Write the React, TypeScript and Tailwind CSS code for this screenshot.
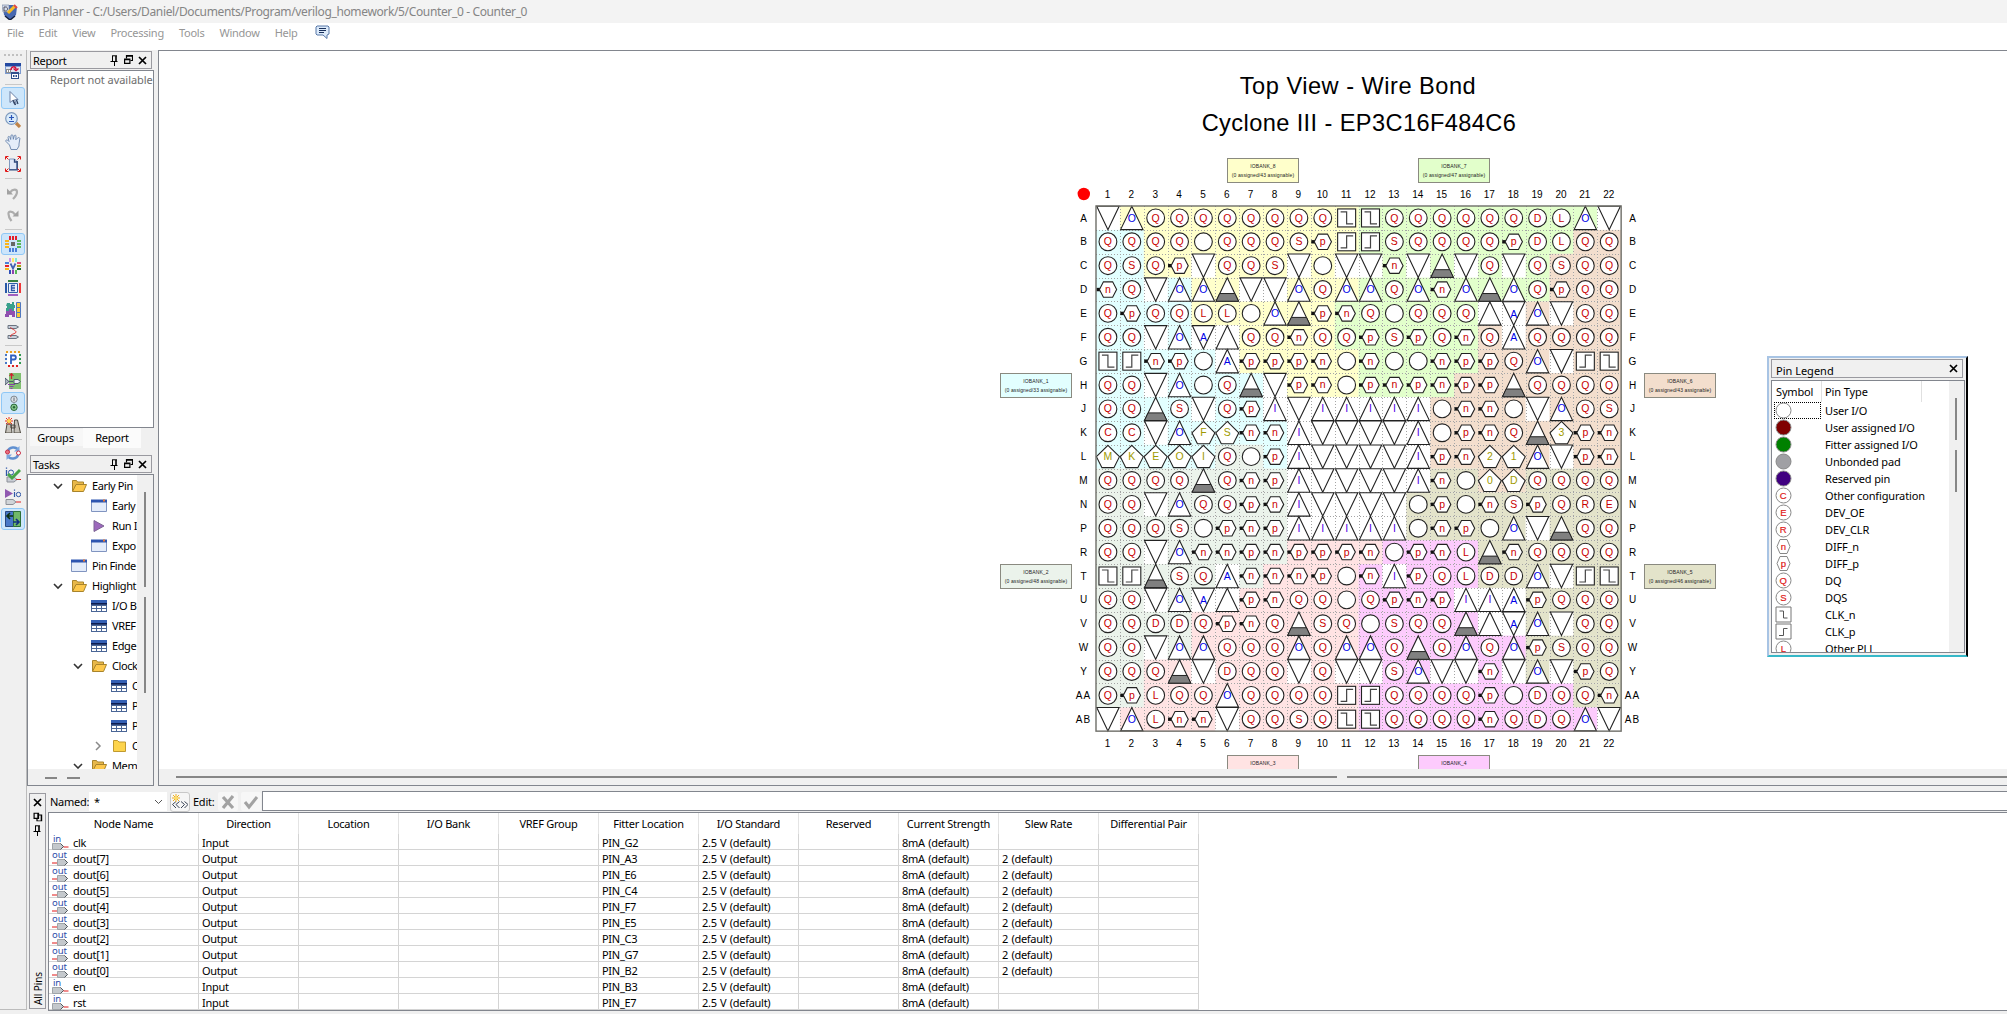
import React from "react";

type P = { children?: React.ReactNode };

const Ico = ({ children, size = 16 }: P & { size?: number }) => (
  <svg width={size} height={size} viewBox="0 0 16 16" className="block shrink-0" fill="none">
    {children}
  </svg>
);

/* ---------- small window glyphs ---------- */
const Pin = () => (
  <svg width="9" height="11" viewBox="0 0 9 11" fill="none" className="shrink-0">
    <path d="M2.5 1v5M0.5 6.5h7M4.5 7v4M2 0.8h5" stroke="#000" />
    <path d="M6 1v5" stroke="#000" strokeWidth="1.6" />
  </svg>
);
const Restore = () => (
  <svg width="9" height="10" viewBox="0 0 9 10" fill="none" className="shrink-0">
    <path d="M2.5 3.5v-2.8h6v4.8h-2M2.5 1.2h6" stroke="#000" strokeWidth="1.2" />
    <path d="M0.6 4h5.3v4.4h-5.3zM0.6 4.6h5.3" stroke="#000" strokeWidth="1.2" />
  </svg>
);
const Close = () => (
  <svg width="9" height="9" viewBox="0 0 9 9" className="shrink-0">
    <path d="M1 1l7 7M8 1l-7 7" stroke="#000" strokeWidth="1.7" />
  </svg>
);

/* ---------- toolbar icons ---------- */
const tools: Record<string, React.ReactNode> = {
  report: (
    <>
      <path d="M0 0h16v11H0z" fill="#7d9bd0" />
      <path d="M0 0h16v3H0z" fill="#2348a0" />
      <path d="M1 4h14v6H1z" fill="#dfe5f2" />
      <path d="M1 6h5v4H1z" fill="#8c8c8c" />
      <path d="M2 7h1v2H2zM4 7h1v2H4z" fill="#fff" />
      <path d="M6 7c0-4 5-4 5-1M8.500 5.500l2.500 2 2.500-2" stroke="#d0103c" strokeWidth="1.500" />
      <path d="M6 9h8v7H6z" fill="#30508c" />
      <path d="M7 11h6v4H7z" fill="#fff" />
      <path d="M8 12h1.500v2H8zM10.500 12H12v2h-1.500z" fill="#30508c" />
    </>
  ),
  cursor: (
    <>
      <path d="M5 1.500v11l2.500-2 2 4 1.700-.8-1.700-3.900 3.500-.3z" fill="#fff" stroke="#6b80a6" />
      <path d="M8 10l2.500 5M11.500 10l1.500 4" stroke="#283c5c" strokeWidth="1.200" />
    </>
  ),
  zoom: (
    <>
      <path d="M11 11l4 4" stroke="#c08448" strokeWidth="3.200" />
      <circle cx="6.500" cy="6.500" r="5.800" fill="#d9ebfa" stroke="#7d99bd" strokeWidth="1.200" />
      <path d="M4 5.500h5M6.500 3v5M4 9.500h5" stroke="#2a55b8" strokeWidth="1.200" />
    </>
  ),
  hand: (
    <path
      d="M4.500 11L1 7.500c-1-1.500 1-2 2-1l1 1-1-4c0-1.500 1.500-1.500 2 0l.7 2L6 1.800c0-1.400 1.800-1.400 2 0l.3 3.500L9.200 2c.4-1.300 2-1 1.800.3l-.2 3.500L12.500 4c.8-1 2.900-.2 2.300 1L14 10v2l-2 3.500H6z"
      fill="#e4edf9"
      stroke="#6882aa"
      strokeWidth=".9"
    />
  ),
  fit: (
    <>
      <path d="M4.500 3h5l2 2v8.500h-7z" fill="#dfe8f7" stroke="#8098c0" />
      <path d="M9.500 3v3h2.500M12.300 5v8.800H4" stroke="#314b7c" strokeWidth="1.300" />
      <path d="M.5 3.500v-3h3M1 1l2.500 2.500M12.500.5h3v3M15 1l-2.500 2.500M.5 12.500v3h3M1 15l2.500-2.500M15.500 12.500v3h-3M15 15l-2.500-2.500" stroke="#e01717" />
    </>
  ),
  undo: (
    <>
      <path d="M5 7.500c3-4 7-3.500 7-.5 0 3-1.500 4.500-4 7" stroke="#adadad" strokeWidth="2.200" />
      <path d="M2 3.500v6h6z" fill="#a2a2a2" />
    </>
  ),
  redo: (
    <>
      <path d="M10 7.500C7 3.500 3 4 3.500 7c0 3 1 4.500 3 7" stroke="#adadad" strokeWidth="2.200" />
      <path d="M13.500 3.500v6h-6z" fill="#a2a2a2" />
    </>
  ),
  chip: (
    <>
      <path d="M4 0h2v4H4zM7 0h2v4H7zM10 0h2v4h-2z" fill="#e5202b" />
      <path d="M4 12h2v4H4zM7 12h2v4H7zM10 12h2v4h-2z" fill="#4a7fd8" />
      <path d="M0 4h4v2H0zM0 7h4v2H0zM0 10h4v2H0z" fill="#f8b41c" />
      <path d="M12 4h4v2h-4zM12 7h4v2h-4zM12 10h4v2h-4z" fill="#58b858" />
      <path d="M6 6h4v4H6z" fill="#666" />
    </>
  ),
  vref: (
    <>
      <path d="M4 0h2v4H4z" fill="#c995e8" />
      <path d="M7 0h2v4H7z" fill="#fde86a" />
      <path d="M10 0h2v4h-2z" fill="#7ee8d8" />
      <path d="M0 4h4v2H0z" fill="#4a7fd8" />
      <path d="M0 7h4v2H0z" fill="#e5202b" />
      <path d="M0 10h4v2H0z" fill="#f8b41c" />
      <path d="M12 4h4v2h-4z" fill="#e04a80" />
      <path d="M12 7h4v2h-4z" fill="#b09c10" />
      <path d="M12 10h4v2h-4z" fill="#17682a" />
      <path d="M4 12h2v4H4z" fill="#3050b8" />
      <path d="M7 12h2v4H7z" fill="#9040b0" />
      <path d="M10 12h2v4h-2z" fill="#58b858" />
      <path d="M5.500 5.500l2.500 5 2.500-5" stroke="#4060b0" strokeWidth="1.700" />
    </>
  ),
  edge: (
    <>
      <path d="M3 0h10v2H3z" fill="#388040" />
      <path d="M3 14h10v2H3z" fill="#a060c0" />
      <path d="M0 3h2v10H0z" fill="#2858a8" />
      <path d="M14 3h2v10h-2z" fill="#f03838" />
      <path d="M3.500 3.500h9v9h-9z" fill="#eef2fc" stroke="#3060a8" />
      <path d="M10 5.500H6.500v5H10M6.500 8H10" stroke="#3058a8" strokeWidth="1.300" />
    </>
  ),
  pad: (
    <>
      <path d="M2 1h3v1h2V0h2v3h1v3H9v3H1V6h1V4H1z" fill="#38a08c" />
      <path d="M1 9h3V7h3v2h3v6H7v-2H4v2H0v-3h1z" fill="#9050b0" />
      <path d="M11.500.5h4v5h-4zM11.500 5.500h4v5h-4zM11.500 10.500h4v5h-4z" fill="#fac832" stroke="#5078c0" />
    </>
  ),
  diff: (
    <>
      <path d="M3 1.500h8l2.500 1.500L11 4.500H3zM3 11.500h8l2.500 1.500-2.500 1.500H3z" fill="#c8d0dc" stroke="#6c7480" />
      <path d="M6 3c-2 1 5 3 5 5s-7 2-5 5" stroke="#e03030" />
    </>
  ),
  p: (
    <>
      <path d="M2 2h12v12H2z" fill="#fff" />
      <path d="M1 3v12" stroke="#4878c8" strokeWidth="2" strokeDasharray="2 2" />
      <path d="M1 1h14" stroke="#e8a020" strokeWidth="2" strokeDasharray="2 2" />
      <path d="M15 3v12" stroke="#309850" strokeWidth="2" strokeDasharray="2 2" />
      <path d="M3 15h12" stroke="#e02020" strokeWidth="2" strokeDasharray="2 2" />
      <path d="M6 13V4.500h3c2.500 0 2.500 4 0 4H6" stroke="#3060c0" strokeWidth="1.800" />
    </>
  ),
  io: (
    <>
      <path d="M4 0h12v16H4z" fill="#80c070" />
      <path d="M0 5l4 3.500L0 12zM4 8.500h4" fill="#a8b4c0" stroke="#4c5868" />
      <path d="M9 6.500h4l2.500 2-2.500 2H9z" fill="#e8ecf4" stroke="#4c5868" />
      <path d="M6.500 6V1.500M4.500 3l2-2.500 2 2.500" stroke="#d02030" strokeWidth="1.200" />
      <path d="M3 11.500h7M4.500 13.500h4M5.500 15.500h2" stroke="#8840a8" />
    </>
  ),
  coin: (
    <>
      <circle cx="9" cy="4.300" r="3.200" fill="#dde2e8" stroke="#808890" />
      <path d="M9 2.500V6" stroke="#606870" />
      <circle cx="9" cy="12.300" r="3.200" fill="#88c890" stroke="#286838" />
      <circle cx="9" cy="12.300" r="1.200" fill="#286838" />
    </>
  ),
  find: (
    <>
      <path d="M2 7h4l1 9H0.500zM9.500 3h3l3 13H9zM6 8h4v3H6z" fill="#c4c0b8" stroke="#4c4840" />
      <path d="M4 0v8M0 4h8M1 1l6 6M7 1L1 7" stroke="#e83018" />
      <circle cx="4" cy="4" r="2" fill="#ffd84a" />
    </>
  ),
  sync: (
    <>
      <path d="M3 6c1-4 8-5 10-1" stroke="#6090d0" strokeWidth="2.600" />
      <path d="M13 10c-1 4-8 5-10 1" stroke="#6090d0" strokeWidth="2.600" />
      <path d="M14.500 1v5.500H9zM1.500 15V9.500H7z" fill="#7ba5de" />
      <circle cx="2.500" cy="7" r="2" fill="#e87080" stroke="#c83048" />
      <circle cx="13.500" cy="8" r="2" fill="#fff" stroke="#c83048" />
    </>
  ),
  iocheck: (
    <>
      <path d="M2 10h7l3 2.500-3 2.500H2z" fill="#c8ccd4" stroke="#8c9098" />
      <path d="M11 12.500h5" stroke="#e02020" />
      <path d="M1.500 3v6M1.500.5v1.300" stroke="#3058a8" strokeWidth="1.300" />
      <circle cx="6" cy="5.500" r="2.500" stroke="#3058a8" />
      <path d="M3 7l4 4 8-8" stroke="#48a448" strokeWidth="3" />
    </>
  ),
  ioplay: (
    <>
      <path d="M0 0l8 4.500L0 9z" fill="#9058b0" />
      <path d="M9.500 3v5M9.500.5v1.300" stroke="#3058a8" strokeWidth="1.200" />
      <circle cx="13.500" cy="5.500" r="2.200" stroke="#3058a8" />
      <path d="M1 10.500h7l3 2.500-3 2.500H1z" fill="#d0d4d8" stroke="#8c9098" />
      <path d="M11 13h5" stroke="#e02020" />
    </>
  ),
  swap: (
    <>
      <path d="M.5.5h8v15h-8z" fill="#4878c8" stroke="#284880" />
      <path d="M8.500.5h7v15h-7z" fill="#70b868" stroke="#2c7038" />
      <path d="M2 5h6M5 2L2 5l3 3" stroke="#0c3010" strokeWidth="1.600" />
      <path d="M8 11h6M11 8l3 3-3 3" stroke="#103080" strokeWidth="1.600" />
    </>
  ),
};

const Tool = ({ name, on }: { name: string; on?: boolean }) => (
  <div
    className={
      on
        ? "flex h-[22px] w-[24px] shrink-0 items-center justify-center rounded-[3px] border border-[#90c8f6] bg-[#cde6fb]"
        : "flex h-[22px] w-[24px] shrink-0 items-center justify-center"
    }
  >
    <Ico>{tools[name]}</Ico>
  </div>
);
const Sep = ({ h }: { h: string }) => (
  <div className={`${h} flex w-full shrink-0 items-center pl-[4px]`}>
    <div className="h-px w-[17px] bg-[#c8c8c8]" />
  </div>
);

const Toolbar = () => (
  <div className="flex h-[960px] w-[27px] shrink-0 flex-col items-start border-r border-b border-[#bcbcbc] pl-px">
    <div className="flex h-[10px] shrink-0 gap-[2px] pt-[4px] pl-[3px]">
      {[0, 1, 2, 3, 4].map((i) => (
        <div key={i} className="h-[2px] w-[2px] bg-[#c0c0c0]" />
      ))}
    </div>
    <Tool name="report" />
    <Sep h="h-[5px]" />
    <Tool name="cursor" on />
    <Tool name="zoom" />
    <Tool name="hand" />
    <Tool name="fit" />
    <Sep h="h-[7px]" />
    <Tool name="undo" />
    <Tool name="redo" />
    <Sep h="h-[7px]" />
    <Tool name="chip" on />
    <Tool name="vref" />
    <Tool name="edge" />
    <Tool name="pad" />
    <Tool name="diff" />
    <Sep h="h-[5px]" />
    <Tool name="p" />
    <Tool name="io" />
    <Tool name="coin" on />
    <Tool name="find" />
    <Sep h="h-[6px]" />
    <Tool name="sync" />
    <Tool name="iocheck" />
    <Tool name="ioplay" />
    <Tool name="swap" on />
  </div>
);

/* ---------- tree ---------- */
const Folder = ({ open }: { open?: boolean }) => (
  <Ico>
    {open ? (
      <>
        <path d="M1.500 13V2.500h4l1 1.500h6v3" fill="#e8b84a" stroke="#a8842c" />
        <path d="M1.500 13.500L5 6.500h10.500l-3 7z" fill="#fdc84c" stroke="#a8842c" />
      </>
    ) : (
      <path d="M2.500 13.500v-11h4l1.500 1.500h6.500v9.500z" fill="#fdd44c" stroke="#c09a30" />
    )}
  </Ico>
);
const Win = () => (
  <Ico>
    <path d="M.5 2.500h15v11H.5z" fill="#e4ecfa" stroke="#8094c0" />
    <path d="M0 1.500h16v3H0z" fill="#2c54b0" />
    <path d="M12 1.500h2v2h-2z" fill="#e87830" />
  </Ico>
);
const Table = () => (
  <Ico>
    <path d="M0 2h16v12H0z" fill="#4a6696" />
    <path d="M0 2h16v3H0z" fill="#3460b4" />
    <path d="M0 5h16v1.500H0z" fill="#0c1c50" />
    <path d="M1 8h4v2H1zM6 8h4v2H6zM11 8h4v2h-4zM1 11h4v2H1zM6 11h4v2H6zM11 11h4v2h-4z" fill="#fff" />
  </Ico>
);
const Play = () => (
  <Ico>
    <path d="M3 2.500l10 5.500-10 5.500z" fill="#9c68bc" stroke="#7c6494" />
  </Ico>
);
const Chev = ({ right }: { right?: boolean }) => (
  <svg width="10" height="10" viewBox="0 0 10 10" fill="none" className="shrink-0">
    {right ? (
      <path d="M3 1l4 4-4 4" stroke="#8a8a8a" strokeWidth="1.500" />
    ) : (
      <path d="M1 3l4 4 4-4" stroke="#333" strokeWidth="1.600" />
    )}
  </svg>
);

const tree: [string, string, string, string][] = [
  ["pl-[26px]", "v", "folder", "Early Pin"],
  ["pl-[46px]", "", "win", "Early"],
  ["pl-[46px]", "", "play", "Run I"],
  ["pl-[46px]", "", "win", "Expo"],
  ["pl-[26px]", "", "win", "Pin Finde"],
  ["pl-[26px]", "v", "folder", "Highlight"],
  ["pl-[46px]", "", "table", "I/O B"],
  ["pl-[46px]", "", "table", "VREF"],
  ["pl-[46px]", "", "table", "Edge"],
  ["pl-[46px]", "v", "folder", "Clock"],
  ["pl-[66px]", "", "table", "C"],
  ["pl-[66px]", "", "table", "P"],
  ["pl-[66px]", "", "table", "P"],
  ["pl-[66px]", ">", "closed", "C"],
  ["pl-[46px]", "v", "folder", "Mem"],
];

const DockHeader = ({ title }: { title: string }) => (
  <div className="ml-[3px] flex h-[18px] w-[122px] shrink-0 items-center border border-[#9a9aa0] pl-[2px] pr-[4px]">
    <span className="mt-px flex-1 text-black">{title}</span>
    <div className="flex items-center gap-[5px]">
      <Pin />
      <Restore />
      <Close />
    </div>
  </div>
);

const SidePanel = () => (
  <div className="flex h-full w-[127px] shrink-0 flex-col">
    <div className="h-px shrink-0" />
    <DockHeader title="Report" />
    <div className="mt-px h-[358px] shrink-0 border border-[#82868e] bg-white pt-px pl-[22px] tracking-[-0.05px] whitespace-nowrap text-[#6d6d6d]">
      Report not available
    </div>
    <div className="ml-[3px] flex h-[27px] shrink-0 items-start">
      <div className="mt-px flex h-[17px] w-[53px] items-center justify-center bg-[#f7f7f7] pr-[2px]">Groups</div>
      <div className="flex h-[20px] w-[58px] items-center justify-center bg-[#fbfbfb]">Report</div>
    </div>
    <DockHeader title="Tasks" />
    <div className="mt-px flex h-[312px] shrink-0 flex-col border border-[#82868e] bg-[#f0f0f0]">
      <div className="flex h-[294px]">
        <div className="h-[294px] w-[109px] overflow-hidden bg-white pt-px">
          {tree.map(([pad, ch, icon, label], i) => (
            <div key={i} className={`${pad} flex h-[20px] items-center whitespace-nowrap tracking-[-0.4px]`}>
              <div className="-ml-px w-[18px] shrink-0">
                {ch === "v" && <Chev />}
                {ch === ">" && <Chev right />}
              </div>
              {icon === "folder" ? <Folder open /> : icon === "closed" ? <Folder /> : icon === "win" ? <Win /> : icon === "play" ? <Play /> : <Table />}
              <span className="ml-[5px]">{label}</span>
            </div>
          ))}
        </div>
        <div className="flex flex-col items-center gap-[10px] pt-[17px] pl-[7px]">
          <div className="h-[95px] w-[2px] bg-[#868686]" />
          <div className="h-[96px] w-[2px] bg-[#868686]" />
        </div>
      </div>
      <div className="flex gap-[10px] pt-[8px] pl-[17px]">
        <div className="h-[2px] w-[12px] bg-[#868686]" />
        <div className="h-[2px] w-[13px] bg-[#868686]" />
      </div>
    </div>
  </div>
);

/* ---------- package drawing ---------- */
const ROWS: [string, string, string][] = [
  ["A", "v O Q Q Q Q Q Q Q Q z z Q Q Q Q Q Q D L O v", "8888888888877777777777"],
  ["B", "Q Q Q Q o Q Q Q S p s s S Q Q Q Q p D L Q Q", "1188888888877777777766"],
  ["C", "Q S Q p v Q Q S v o v v n v G v Q v Q S Q Q", "1188888888777777777666"],
  ["D", "n Q v O O G v v O Q O O Q O n O G O Q p Q Q", "1111888888877777777666"],
  ["E", "Q p Q Q L L o O G p n Q o Q Q Q ^ a O v Q Q", "1111888888777777666666"],
  ["F", "Q Q v O a ^ Q Q n Q Q p S p Q n Q A Q Q Q Q", "1111888888777777666666"],
  ["G", "z s n p o A p p p n o n o o n p p Q O v s z", "1111188888877777666666"],
  ["H", "Q Q v O o Q G v p n o p n p n p p G Q Q Q Q", "1111111888877776666666"],
  ["J", "Q Q G S v Q p I v I I I I I o n n o v O Q S", "1111111188888866666666"],
  ["K", "C C v O 5F 5S n n I v v v v I o p n Q G 53 p n", "1111111188888866666666"],
  ["L", "5M 5K 5E 5O 5I Q o p I v v v v I p n 52 51 O v p n", "1111122188888866666666"],
  ["M", "Q Q Q Q G Q n p I v v v v I n o 50 5D Q Q Q Q", "2222222288888855665555"],
  ["N", "Q Q v O Q Q p n I v v v v o p o n S p Q R E", "2222222288888555555555"],
  ["P", "Q Q Q S o p n p I I I I I o n p o O v G Q Q", "2222222288888555555555"],
  ["R", "Q Q v O n n p n p p p n o p n L G n Q Q Q Q", "2222222233334444555555"],
  ["T", "z s G S Q A n n n p o n I p Q L D D O v s z", "2222222333344444555555"],
  ["U", "Q Q v O a ^ p n Q Q o Q p n p I I A p Q Q Q", "2222223333344444445555"],
  ["V", "Q Q D D Q p n Q G S Q o S Q Q G ^ a O v Q Q", "2222333333344444445555"],
  ["W", "Q Q v O O Q Q Q O Q O O Q G Q O Q O p S Q Q", "2222333333344444445555"],
  ["Y", "Q Q Q G v D Q Q v Q v v S O v v n v O v p Q", "2233333333344444445555"],
  ["AA", "Q p L Q Q O Q Q Q Q s s Q Q Q Q p o D Q Q n", "2233333333344444444455"],
  ["AB", "v O L n n v Q Q S Q z z Q Q Q Q n Q D Q O v", "3333333333344444444444"],
];
const BANK: Record<string, string> = {
  "1": "#e2ffff",
  "2": "#ebf3eb",
  "3": "#ffe3e3",
  "4": "#fdcbfd",
  "5": "#e3e3ca",
  "6": "#f3decd",
  "7": "#e2ffcb",
  "8": "#ffffcb",
};
const PITCH = 23.87;

const Sym = ({ t, x, y }: { t: string; x: number; y: number }) => {
  const line = { fill: "#fff", stroke: "#222", strokeWidth: 1.1 };
  const label = (s: string, fill: string, dy = 3.6) => (
    <text x={x} y={y + dy} textAnchor="middle" fontSize="10.500" fill={fill}>
      {s}
    </text>
  );
  const up = `M${x - 11.2} ${y + 11.7}L${x} ${y - 11.7}L${x + 11.2} ${y + 11.7}z`;
  const down = `M${x - 11.2} ${y - 11.7}L${x} ${y + 11.7}L${x + 11.2} ${y - 11.7}z`;
  if (t === "v") return <path d={down} {...line} />;
  if (t === "^") return <path d={up} {...line} />;
  if (t === "a") return <><path d={down} {...line} />{label("A", "#0000e6", 4.2)}</>;
  if (t === "A") return <><path d={up} {...line} />{label("A", "#0000e6", 4)}</>;
  if (t === "I") return <><path d={up} {...line} />{label("I", "#5000e6")}</>;
  if (t === "O") return <><path d={up} {...line} />{label("O", "#0000e6")}</>;
  if (t === "G")
    return (
      <>
        <path d={up} {...line} />
        <path d={`M${x - 7.6} ${y + 4}h15.200L${x + 11.2} ${y + 11.7}h-22.400z`} fill="#808080" stroke="#222" />
      </>
    );
  if (t === "z" || t === "s") {
    const d = t === "z" ? `M${x - 6} ${y - 6}h6v12h6.500` : `M${x - 6} ${y + 6}h6v-12h6.500`;
    return (
      <>
        <rect x={x - 9} y={y - 9} width="18" height="18" {...line} />
        <path d={d} fill="none" stroke="#444" strokeWidth="1.200" />
      </>
    );
  }
  if (t === "p" || t === "n")
    return (
      <>
        <rect x={x - 11.5} y={y - 1.7} width="5" height="3.400" fill="#111" />
        <path d={`M${x - 8.5} ${y}L${x - 4.5} ${y - 7.7}h9.200L${x + 8.7} ${y}L${x + 4.7} ${y + 7.7}h-9.200z`} {...line} />
        {label(t, "#c80000", 3.4)}
      </>
    );
  if (t.length === 2)
    return (
      <>
        <path d={`M${x} ${y - 11.3}L${x + 11.5} ${y}L${x + 6} ${y + 11}h-12L${x - 11.5} ${y}z`} {...line} />
        {label(t[1], "#a09a00")}
      </>
    );
  return (
    <>
      <circle cx={x} cy={y} r="8.900" {...line} />
      {t !== "o" && label(t, "#c80000")}
    </>
  );
};

const PinGrid = () => {
  const off = 24;
  const c = (i: number) => off + (i + 0.5) * PITCH;
  const size = PITCH * 22;
  const whites = "v^aAI";
  return (
    <svg width="574" height="574" viewBox="0 0 574 574" className="absolute left-[913px] top-[131px] tracking-normal [font-family:'Liberation_Sans',sans-serif]">
      {ROWS.map(([, syms, banks], r) =>
        syms.split(" ").map((t, i) => (
          <rect
            key={`${r}-${i}`}
            x={off + i * PITCH}
            y={off + r * PITCH}
            width={PITCH + 0.2}
            height={PITCH + 0.2}
            fill={whites.includes(t) ? "#fff" : BANK[banks[i]]}
          />
        ))
      )}
      {Array.from({ length: 21 }, (_, i) => (
        <g key={i} stroke="#a4a4a4" strokeDasharray="1 2">
          <path d={`M${Math.round(off + (i + 1) * PITCH) + 0.5} ${off}v${size}`} />
          <path d={`M${off} ${Math.round(off + (i + 1) * PITCH) + 0.5}h${size}`} />
        </g>
      ))}
      {ROWS.map(([, syms], r) => syms.split(" ").map((t, i) => <Sym key={`${r}-${i}`} t={t} x={c(i)} y={c(r)} />))}
      <rect x={off} y={off} width={size} height={size} fill="none" stroke="#6e6e68" strokeWidth="1.400" />
      <circle cx="11.800" cy="12" r="6.200" fill="#f00" />
      <g fontSize="10" fill="#000" textAnchor="middle">
        {ROWS.map(([name], r) => (
          <g key={name}>
            <text x={11.5} y={c(r) + 3.6} letterSpacing={name.length > 1 ? 1 : 0}>{name}</text>
            <text x={560.5} y={c(r) + 3.6} letterSpacing={name.length > 1 ? 1 : 0}>{name}</text>
            <text x={c(r) - 0.5} y="15.800">{r + 1}</text>
            <text x={c(r) - 0.5} y="565">{r + 1}</text>
          </g>
        ))}
      </g>
    </svg>
  );
};

const banks: [string, string, string][] = [
  ["left-[1068px] top-[107px] bg-[#ffffcb]", "IOBANK_8", "(0 assigned/43 assignable)"],
  ["left-[1259px] top-[107px] bg-[#e2ffcb]", "IOBANK_7", "(0 assigned/47 assignable)"],
  ["left-[841px] top-[322px] bg-[#e2ffff]", "IOBANK_1", "(0 assigned/33 assignable)"],
  ["left-[1485px] top-[322px] bg-[#f3decd]", "IOBANK_6", "(0 assigned/43 assignable)"],
  ["left-[841px] top-[513px] bg-[#ebf3eb]", "IOBANK_2", "(0 assigned/48 assignable)"],
  ["left-[1485px] top-[513px] bg-[#e3e3ca]", "IOBANK_5", "(0 assigned/46 assignable)"],
  ["left-[1068px] top-[704px] bg-[#ffe3e3]", "IOBANK_3", ""],
  ["left-[1259px] top-[704px] bg-[#fdcbfd]", "IOBANK_4", ""],
];

const legend: [string, string][] = [
  ["#ffffff", "User I/O"],
  ["#800000", "User assigned I/O"],
  ["#008000", "Fitter assigned I/O"],
  ["#a0a0a4", "Unbonded pad"],
  ["#400080", "Reserved pin"],
  ["C", "Other configuration"],
  ["E", "DEV_OE"],
  ["R", "DEV_CLR"],
  ["n", "DIFF_n"],
  ["p", "DIFF_p"],
  ["Q", "DQ"],
  ["S", "DQS"],
  ["z", "CLK_n"],
  ["s", "CLK_p"],
  ["L", "Other PLL"],
];

const LegendIcon = ({ k }: { k: string }) => (
  <svg width="17" height="17" viewBox="0 0 17 17" fill="none" className="block shrink-0 tracking-normal [font-family:'Liberation_Sans',sans-serif]">
    {k[0] === "#" ? (
      <circle cx="8.500" cy="8.500" r="7.500" fill={k} stroke="#888" />
    ) : k === "z" || k === "s" ? (
      <>
        <path d="M1 1h15v15H1z" stroke="#777" />
        <path d={k === "z" ? "M4.500 5h4v7h4" : "M4 12.500h4.500v-7h4"} stroke="#555" />
      </>
    ) : (
      <>
        {k === "n" || k === "p" ? (
          <path d="M2 8.500l3-7h7l3 7-3 7H5z" stroke="#888" />
        ) : (
          <circle cx="8.500" cy="8.500" r="7.500" stroke="#888" />
        )}
        <text x="8.300" y="11.600" textAnchor="middle" fontSize="9.500" fill="#e01818" stroke="#e01818" strokeWidth=".2">{k}</text>
      </>
    )}
  </svg>
);

const Legend = () => (
  <div className="absolute left-[1608px] top-[305px] flex h-[301px] w-[201px] flex-col border-2 border-t-[#a8c4e4] border-r-black border-b-[#36b8c8] border-l-[#a8c4e4] bg-[#f0f0f0] px-[2px] pt-px">
    <div className="flex h-[19px] w-[192px] shrink-0 items-center justify-between border border-[#9a9aa0] px-[4px] tracking-[0px]">
      <span className="mt-[4px]">Pin Legend</span>
      <Close />
    </div>
    <div className="mt-[2px] flex h-[273px] w-[194px] shrink-0 border border-[#82868e]">
      <div className="flex w-[177px] flex-col overflow-hidden bg-white">
        <div className="flex h-[21px] shrink-0 items-center">
          <div className="flex h-full w-[50px] items-center border-r border-[#e0e0e0] pl-[4px] tracking-[-0.15px]">Symbol</div>
          <div className="flex h-full w-[100px] items-center border-r border-[#e0e0e0] pl-[3px] tracking-[-0.1px]">Pin Type</div>
        </div>
        {legend.map(([k, label], i) => (
          <div key={label} className="flex h-[17px] shrink-0 items-center whitespace-nowrap tracking-[-0.15px]">
            <div className={i === 0 ? "ml-[2px] h-[17px] w-[47px] border border-dotted border-black" : "ml-[3px] h-[17px] w-[46px]"}>
              <div className={i === 0 ? "-mt-px" : ""}>
                <LegendIcon k={k} />
              </div>
            </div>
            <span className="ml-[4px] mt-px">{label}</span>
          </div>
        ))}
      </div>
      <div className="flex flex-col gap-[10px] pt-[17px] pl-[6px]">
        <div className="h-[42px] w-[2px] bg-[#868686]" />
        <div className="h-[42px] w-[2px] bg-[#868686]" />
      </div>
    </div>
  </div>
);

const Canvas = () => (
  <div className="ml-[4px] flex h-[736px] flex-1 flex-col border-t border-b border-l border-[#82868e]">
    <div className="relative h-[718px] overflow-hidden bg-white">
      <div className="absolute left-[1049px] top-[22px] w-[300px] text-center text-[23.600px] tracking-[0.5px] leading-[26px] text-black [font-family:'Liberation_Sans',sans-serif]">Top View - Wire Bond</div>
      <div className="absolute left-[1000px] top-[59px] w-[400px] text-center text-[23.600px] tracking-[0.4px] leading-[26px] text-black [font-family:'Liberation_Sans',sans-serif]">Cyclone III - EP3C16F484C6</div>
      {banks.map(([cls, name, sub]) => (
        <div key={name} className={`${cls} absolute flex h-[25px] w-[72px] flex-col items-center border border-[#8a8a80] pt-[3px] text-[5px] leading-[9px] tracking-[0.1px] whitespace-nowrap text-[#222] [font-family:'Liberation_Sans',sans-serif]`}>
          <div>{name}</div>
          <div>{sub}</div>
        </div>
      ))}
      <PinGrid />
      <Legend />
    </div>
    <div className="flex flex-1 gap-[10px] bg-[#f0f0f0] pt-[7px] pl-[17px]">
      <div className="h-[2px] w-[1161px] bg-[#868686]" />
      <div className="h-[2px] flex-1 bg-[#868686]" />
    </div>
  </div>
);

/* ---------- bottom panel ---------- */
const heads = ["Direction", "Location", "I/O Bank", "VREF Group", "Fitter Location", "I/O Standard", "Reserved", "Current Strength", "Slew Rate", "Differential Pair"];
const pins: [string, string][] = [
  ["clk", "PIN_G2"],
  ["dout[7]", "PIN_A3"],
  ["dout[6]", "PIN_E6"],
  ["dout[5]", "PIN_C4"],
  ["dout[4]", "PIN_F7"],
  ["dout[3]", "PIN_E5"],
  ["dout[2]", "PIN_C3"],
  ["dout[1]", "PIN_G7"],
  ["dout[0]", "PIN_B2"],
  ["en", "PIN_B3"],
  ["rst", "PIN_E7"],
];

const NodeIcon = ({ out }: { out: boolean }) => (
  <div className="flex h-[16px] w-[17px] shrink-0 flex-col items-start">
    <span className={out ? "h-[9px] text-[9.500px] leading-[9px] tracking-[0px] text-[#2c4ca8]" : "ml-px h-[9px] text-[9.500px] leading-[9px] text-[#2c4ca8]"}>{out ? "out" : "in"}</span>
    <svg width="17" height="7" viewBox="0 0 17 7" className="shrink-0">
      {out ? (
        <>
          <path d="M0 4h5" stroke="#e01818" />
          <path d="M5.500.5h7l3 3-3 3h-7z" fill="#c4c8cc" stroke="#a0a4a8" />
          <path d="M12.500.5l3 3-3 3" fill="none" stroke="#50585c" />
        </>
      ) : (
        <>
          <path d="M.5.5h8l3 3-3 3h-8z" fill="#c4c8cc" stroke="#a0a4a8" />
          <path d="M8.500.5l3 3-3 3" fill="none" stroke="#50585c" />
          <path d="M11.500 4h5" stroke="#e01818" />
        </>
      )}
    </svg>
  </div>
);

const BottomPanel = () => (
  <div className="flex min-h-0 flex-1 pt-[5px]">
    <div className="mt-[2px] ml-[2px] flex h-[216px] w-[17px] shrink-0 flex-col items-center border border-[#9a9aa0] pt-[4px] pb-[3px]">
      <Close />
      <div className="mt-[5px] rotate-90"><Restore /></div>
      <div className="mt-[3px]"><Pin /></div>
      <div className="flex-1" />
      <div className="ml-px rotate-180 text-[10px] leading-[12px] tracking-[-0.1px] text-black [writing-mode:vertical-rl]">All Pins</div>
    </div>
    <div className="ml-[2px] flex min-w-0 flex-1 flex-col">
      <div className="flex h-[21px] shrink-0 items-center">
        <span className="w-[41px] pl-[2px]">Named:</span>
        <div className="flex h-[19px] w-[78px] items-center justify-between bg-white pr-[4px] pl-[5px]">
          <span>*</span>
          <svg width="9" height="9" viewBox="0 0 9 9" fill="none"><path d="M1 3l3.500 3.500L8 3" stroke="#555" /></svg>
        </div>
        <div className="ml-[3px] flex h-[20px] w-[20px] items-center justify-center rounded-[3px] border border-[#c8c8c8] bg-[#f6f6f6]">
          <Ico>
            <path d="M4 7.500L.5 10.500 4 14M7.500 7.500L4 10.500 7.500 14M9 7.500l3.500 3L9 14M12.500 7.500l3.500 3-3.500 3.500" stroke="#3c4658" />
            <path d="M4 0v8M0 4h8M1 1l6 6M7 1L1 7" stroke="#f0b020" />
            <circle cx="4" cy="4" r="1.500" fill="#ffe060" />
          </Ico>
        </div>
        <span className="ml-[3px] w-[25px]">Edit:</span>
        <div className="flex h-[19px] w-[20px] items-center justify-center rounded-[2px] bg-[#f7f7f7]">
          <Ico><path d="M3 3l10 11M13 2L3 14" stroke="#a2a2a2" strokeWidth="3.200" /></Ico>
        </div>
        <div className="ml-[3px] flex h-[19px] w-[20px] items-center justify-center rounded-[2px] bg-[#f7f7f7]">
          <Ico><path d="M2 8l4 5 8-10" stroke="#a2a2a2" strokeWidth="3" /></Ico>
        </div>
        <div className="ml-[1px] h-[20px] flex-1 self-start border-t border-b border-l border-[#82868e] bg-white" />
      </div>
      <div className="flex h-[199px] shrink-0 flex-col border-t border-b border-l border-[#82868e] bg-white">
        <div className="flex h-[21px] shrink-0 items-center text-center">
          <div className="h-full w-[150px] border-r border-[#e4e4e4] leading-[21px]">Node Name</div>
          {heads.map((h) => (
            <div key={h} className="h-full w-[100px] border-r border-[#e4e4e4] leading-[21px]">{h}</div>
          ))}
        </div>
        {pins.map(([name, loc]) => {
          const out = name.startsWith("dout");
          const cells = [out ? "Output" : "Input", "", "", "", loc, "2.5 V (default)", "", "8mA (default)", out ? "2 (default)" : "", ""];
          return (
            <div key={name} className="flex h-[16px] shrink-0 leading-[16px]">
              <div className="flex w-[150px] items-start border-r border-b border-[#d4d4d4] pl-[3px]">
                <NodeIcon out={out} />
                <span className="ml-[4px] mt-px">{name}</span>
              </div>
              {cells.map((v, i) => (
                <div key={i} className="w-[100px] border-r border-b border-[#d4d4d4] pt-px pl-[3px] tracking-[-0.28px] [word-spacing:0.8px]">{v}</div>
              ))}
            </div>
          );
        })}
      </div>
    </div>
  </div>
);

export default function App() {
  return (
    <div className="flex h-[1014px] w-[2007px] flex-col overflow-hidden bg-[#f0f0f0] text-[11px] leading-[16px] tracking-[-0.25px] text-[#000] [font-family:'Noto_Sans',sans-serif]">
      <div className="flex h-[23px] shrink-0 items-center bg-[#f3f3f3] pl-[2px] text-[12px] text-[#858585]">
        <Ico>
          <path d="M1 3l4-2h6l4 2-1 8-6 5-6-5z" fill="#4868b0" />
          <path d="M0 1h7v7H1z" fill="#d4dcec" stroke="#6c7c9c" strokeWidth=".6" />
          <path d="M2 3h2c2 0 2 4 0 4H2z" stroke="#445" strokeWidth=".9" />
          <path d="M6 9l7-7" stroke="#fabb20" strokeWidth="3" />
          <path d="M12 1l3 3" stroke="#e04848" strokeWidth="2" />
          <path d="M3 12l5 4 5-4" stroke="#152040" strokeWidth="1.500" />
        </Ico>
        <span className="ml-[5px] tracking-[-0.36px]">Pin Planner - C:/Users/Daniel/Documents/Program/verilog_homework/5/Counter_0 - Counter_0</span>
      </div>
      <div className="flex h-[27px] shrink-0 items-start gap-[15px] bg-white pt-[2px] pl-[7px] text-[#969696]">
        <span>File</span>
        <span>Edit</span>
        <span>View</span>
        <span>Processing</span>
        <span>Tools</span>
        <span>Window</span>
        <span>Help</span>
        <svg width="15" height="14" viewBox="0 0 15 14" fill="none" className="ml-[2px]">
          <path d="M2 1h11l1 1v7l-2 1v3.500L8 10H2L1 9V2z" fill="#dceafa" stroke="#5878a8" />
          <path d="M4 3.500h7M4 5.500h7M4 7.500h5" stroke="#18305c" />
        </svg>
      </div>
      <div className="flex min-h-0 flex-1">
        <Toolbar />
        <div className="flex min-w-0 flex-1 flex-col">
          <div className="flex h-[736px] shrink-0">
            <SidePanel />
            <Canvas />
          </div>
          <BottomPanel />
        </div>
      </div>
    </div>
  );
}
